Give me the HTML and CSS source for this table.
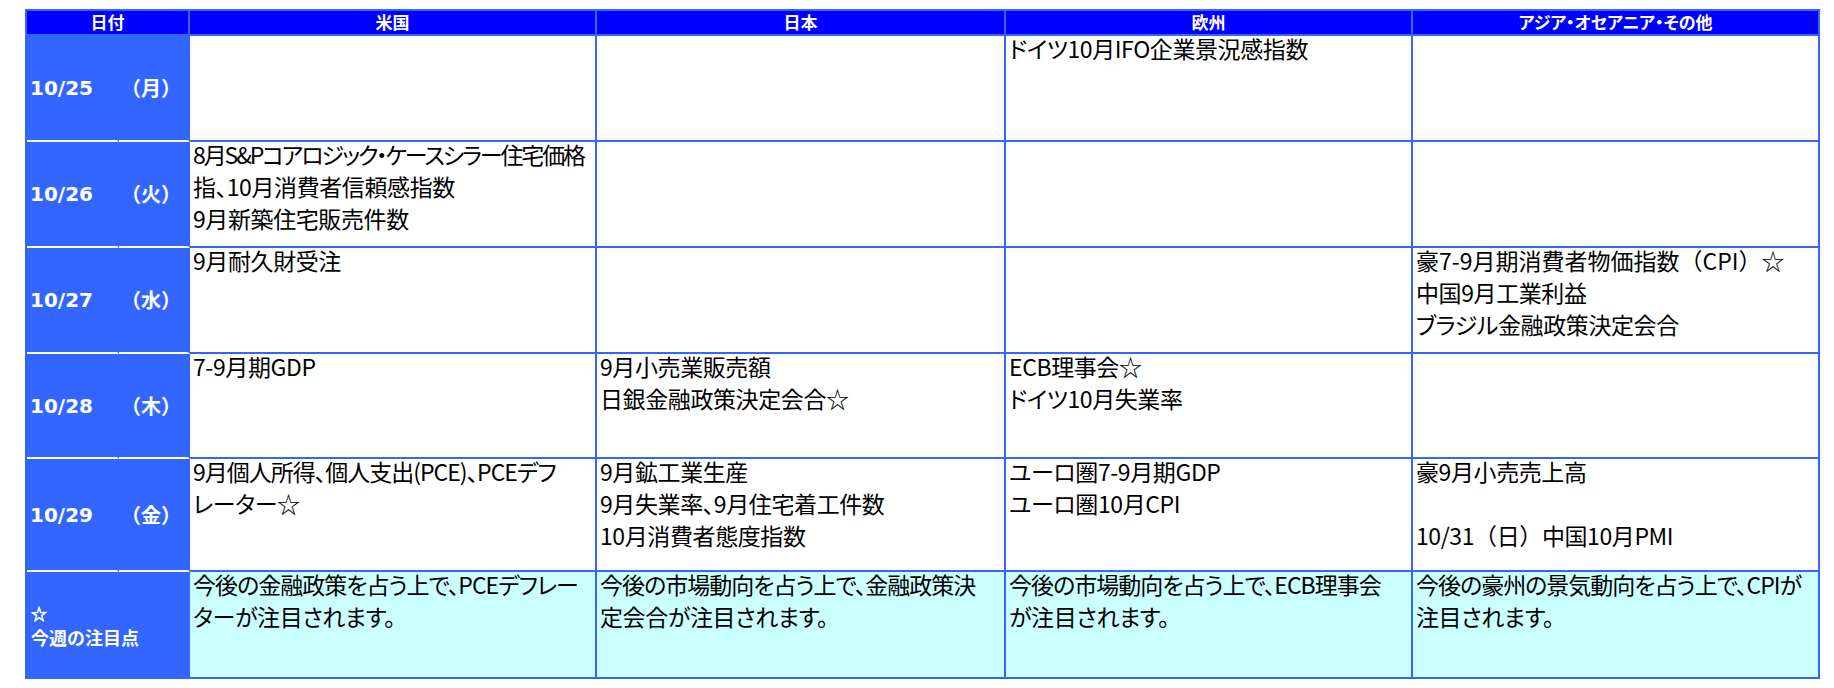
FILE: index.html
```html
<!DOCTYPE html>
<html lang="ja">
<head>
<meta charset="utf-8">
<title>週間予定</title>
<link rel="stylesheet" href="styles.css">
</head>
<body>
<div class="sheet">
  <div class="hd span2">日付</div>
  <div class="hd">米国</div>
  <div class="hd">日本</div>
  <div class="hd">欧州</div>
  <div class="hd">アジア・オセアニア・その他</div>

  <div class="dt">10/25</div><div class="dw">（月）</div>
  <div class="c"></div>
  <div class="c"></div>
  <div class="c"><div class="t">ドイツ10月IFO企業景況感指数</div></div>
  <div class="c"></div>

  <div class="dt">10/26</div><div class="dw">（火）</div>
  <div class="c"><div class="t"><span class="tight">8月S&amp;Pコアロジック・ケースシラー住宅価格</span><br>指、10月消費者信頼感指数<br>9月新築住宅販売件数</div></div>
  <div class="c"></div>
  <div class="c"></div>
  <div class="c"></div>

  <div class="dt">10/27</div><div class="dw">（水）</div>
  <div class="c"><div class="t">9月耐久財受注</div></div>
  <div class="c"></div>
  <div class="c"></div>
  <div class="c"><div class="t"><span class="wide">豪7-9月期消費者物価指数<span class="fw">（</span>CPI<span class="fw">）</span>☆</span><br>中国9月工業利益<br>ブラジル金融政策決定会合</div></div>

  <div class="dt">10/28</div><div class="dw">（木）</div>
  <div class="c"><div class="t">7-9月期GDP</div></div>
  <div class="c"><div class="t">9月小売業販売額<br>日銀金融政策決定会合☆</div></div>
  <div class="c"><div class="t">ECB理事会☆<br>ドイツ10月失業率</div></div>
  <div class="c"></div>

  <div class="dt">10/29</div><div class="dw">（金）</div>
  <div class="c"><div class="t"><span class="snug">9月個人所得、個人支出(PCE)、PCEデフ</span><br>レーター☆</div></div>
  <div class="c"><div class="t">9月鉱工業生産<br>9月失業率、9月住宅着工件数<br>10月消費者態度指数</div></div>
  <div class="c"><div class="t">ユーロ圏7-9月期GDP<br>ユーロ圏10月CPI</div></div>
  <div class="c"><div class="t">豪9月小売売上高<br><br>10/31<span class="fw">（</span>日<span class="fw">）</span>中国10月PMI</div></div>

  <div class="dn span2"><span class="star">☆</span><span>今週の注目点</span></div>
  <div class="c note"><div class="t"><span class="snug">今後の金融政策を占う上で、PCEデフレー</span><br>ターが注目されます。</div></div>
  <div class="c note"><div class="t"><span class="snug">今後の市場動向を占う上で、金融政策決</span><br>定会合が注目されます。</div></div>
  <div class="c note"><div class="t"><span class="snug">今後の市場動向を占う上で、ECB理事会</span><br>が注目されます。</div></div>
  <div class="c note"><div class="t"><span class="snug">今後の豪州の景気動向を占う上で、CPIが</span><br>注目されます。</div></div>
</div>
</body>
</html>
```

FILE: styles.css
```css
html, body {
  margin: 0;
  padding: 0;
  background: #ffffff;
}

body {
  padding: 9px 0 0 25px;
  font-family: "Noto Sans CJK JP", "Noto Sans", sans-serif;
}

.sheet {
  display: grid;
  grid-template-columns: 92px 71px 407px 409px 407px 407px;
  grid-template-rows: 25px 106px 106px 106px 105px 113px 107px;
  width: 1795px;
  box-sizing: border-box;
  border-top: 2px solid #3366ff;
  border-left: 2px solid #3366ff;
}

.sheet > div {
  box-sizing: border-box;
  border-right: 2px solid #3366ff;
  border-bottom: 2px solid #3366ff;
  min-width: 0;
}

.span2 {
  grid-column: span 2;
}

.hd {
  background: #0000ff;
  color: #ffffff;
  font-weight: 700;
  font-size: 17px;
  line-height: 20px;
  display: flex;
  align-items: center;
  justify-content: center;
  font-feature-settings: "palt";
  padding-bottom: 1px;
}

.dt, .dw {
  background: #3366ff;
  color: #ffffff;
  font-weight: 700;
  display: flex;
  align-items: center;
  padding-left: 2px;
  font-size: 20px;
  line-height: 24px;
}

.sheet > .dt, .sheet > .dw {
  border-bottom: 2px solid #ffffff;
}

.dt {
  font-family: "DejaVu Sans", "Noto Sans CJK JP", sans-serif;
  padding-left: 3px;
}

.dw {
  font-family: "Noto Sans CJK JP", sans-serif;
}

.dn {
  background: #3366ff;
  color: #ffffff;
  font-weight: 700;
  display: flex;
  flex-direction: column;
  justify-content: center;
  padding-left: 4px;
  font-size: 18px;
  line-height: 24px;
}

.star {
  font-size: 16px;
  font-weight: 400;
  -webkit-text-stroke: 0.6px #ffffff;
}

.c {
  background: #ffffff;
  padding: 0 0 0 3px;
  color: #000000;
  font-size: 23px;
  line-height: 32px;
  font-feature-settings: "palt";
  letter-spacing: -0.4px;
  overflow: visible;
}

.c.note {
  background: #ccffff;
}

.t {
  margin-top: -4px;
  white-space: nowrap;
}

.tight {
  letter-spacing: -2.1px;
}

.snug {
  letter-spacing: -1px;
}

.wide {
  letter-spacing: 0;
}

.fw {
  font-feature-settings: normal;
}
```
